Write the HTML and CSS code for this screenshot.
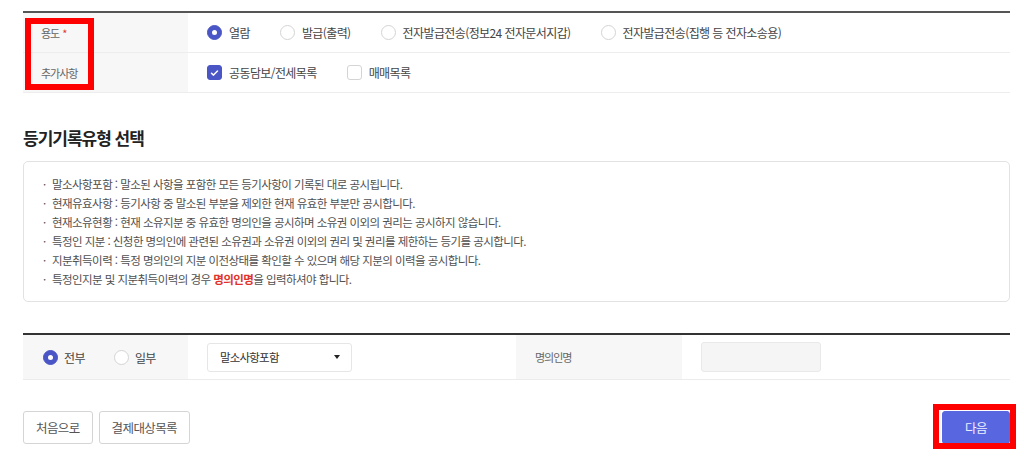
FILE: index.html
```html
<!DOCTYPE html>
<html lang="ko">
<head>
<meta charset="utf-8">
<title>등기기록유형 선택</title>
<link rel="stylesheet" href="styles.css">
</head>
<body>
<div class="page">
  <div class="form-table">
    <div class="row">
      <div class="label">용도 <span class="req">*</span></div>
      <div class="value">
        <label class="opt"><span class="radio on"></span>열람</label>
        <label class="opt"><span class="radio"></span>발급(출력)</label>
        <label class="opt"><span class="radio"></span>전자발급전송(정보24 전자문서지갑)</label>
        <label class="opt"><span class="radio"></span>전자발급전송(집행 등 전자소송용)</label>
      </div>
    </div>
    <div class="row">
      <div class="label">추가사항</div>
      <div class="value">
        <label class="opt"><span class="check on"><svg viewBox="0 0 16 16" width="16" height="16"><path d="M4.3 8.2l2.5 2.4 4.9-5" fill="none" stroke="#fff" stroke-width="1.8" stroke-linecap="round" stroke-linejoin="round"/></svg></span>공동담보/전세목록</label>
        <label class="opt"><span class="check"></span>매매목록</label>
      </div>
    </div>
  </div>

  <h2 class="title">등기기록유형 선택</h2>

  <ul class="info">
    <li>말소사항포함 : 말소된 사항을 포함한 모든 등기사항이 기록된 대로 공시됩니다.</li>
    <li>현재유효사항 : 등기사항 중 말소된 부분을 제외한 현재 유효한 부분만 공시합니다.</li>
    <li>현재소유현황 : 현재 소유지분 중 유효한 명의인을 공시하며 소유권 이외의 권리는 공시하지 않습니다.</li>
    <li>특정인 지분 : 신청한 명의인에 관련된 소유권과 소유권 이외의 권리 및 권리를 제한하는 등기를 공시합니다.</li>
    <li>지분취득이력 : 특정 명의인의 지분 이전상태를 확인할 수 있으며 해당 지분의 이력을 공시합니다.</li>
    <li>특정인지분 및 지분취득이력의 경우 <strong class="em">명의인명</strong>을 입력하셔야 합니다.</li>
  </ul>

  <div class="search-table">
    <div class="cell shade first">
      <label class="opt"><span class="radio on"></span>전부</label>
      <label class="opt"><span class="radio"></span>일부</label>
    </div>
    <div class="cell">
      <div class="select"><span>말소사항포함</span><span class="caret"></span></div>
    </div>
    <div class="cell shade label2">명의인명</div>
    <div class="cell">
      <div class="input"></div>
    </div>
  </div>

  <div class="actions">
    <div class="left">
      <button class="btn">처음으로</button>
      <button class="btn">결제대상목록</button>
    </div>
    <button class="btn primary">다음</button>
  </div>

  <div class="mark mark-1"></div>
  <div class="mark mark-2"></div>
</div>
</body>
</html>
```

FILE: styles.css
```css
* { box-sizing: border-box; }
html, body { margin: 0; padding: 0; background: #fff; }
body {
  font-family: "Noto Sans CJK KR", "Noto Sans", sans-serif;
  color: #444;
  width: 1024px;
  height: 460px;
  overflow: hidden;
}
.page {
  position: relative;
  width: 987px;
  margin-left: 23px;
  padding-top: 11px;
}
.form-table {
  border-top: 2px solid #555;
}
.row {
  display: flex;
  height: 40px;
  border-bottom: 1px solid #ededed;
}
.label {
  width: 165px;
  flex: none;
  background: #f7f7f7;
  display: flex;
  align-items: center;
  padding-left: 18px;
  font-size: 11px;
  letter-spacing: -1px;
  color: #666;
}
.req { color: #e0392b; margin-left: 3px; }
.value {
  flex: 1;
  display: flex;
  align-items: center;
  gap: 30px;
  padding-left: 19px;
}
.opt {
  display: inline-flex;
  align-items: center;
  gap: 7px;
  font-size: 12px;
  letter-spacing: -0.6px;
  color: #444;
  white-space: nowrap;
}
.radio {
  width: 15px;
  height: 15px;
  border-radius: 50%;
  border: 1px solid #d4d4d4;
  background: #fff;
  flex: none;
  display: inline-flex;
  align-items: center;
  justify-content: center;
}
.radio.on {
  border-color: #4a55c6;
  background: #4a55c6;
}
.radio.on::after {
  content: "";
  width: 5px;
  height: 5px;
  border-radius: 50%;
  background: #fff;
}
.check {
  width: 15px;
  height: 15px;
  border-radius: 3px;
  border: 1px solid #d4d4d4;
  background: #fff;
  flex: none;
  display: inline-flex;
  align-items: center;
  justify-content: center;
}
.check.on { background: #4a55c6; border-color: #4a55c6; }
.check svg { width: 14px; height: 14px; }

.title {
  margin: 33px 0 11px;
  font-size: 17px;
  line-height: 24px;
  font-weight: 700;
  letter-spacing: -1px;
  color: #222;
}
.info {
  list-style: none;
  margin: 0;
  padding: 13px 19px 12px;
  border: 1px solid #e2e2e2;
  border-radius: 5px;
  font-size: 11.5px;
  line-height: 19px;
  letter-spacing: -0.55px;
  color: #505050;
}
.info li::before {
  content: "·";
  display: inline-block;
  width: 9px;
}
.em { color: #e0332b; font-weight: 700; }

.search-table {
  margin-top: 31px;
  border-top: 2px solid #333;
  border-bottom: 1px solid #ececec;
  display: flex;
  height: 47px;
}
.cell {
  width: 328px;
  display: flex;
  align-items: center;
  padding-left: 19px;
}
.cell.shade { background: #f7f7f7; width: 165px; }
.cell.first { padding-left: 20px; gap: 0; }
.cell.first .opt { gap: 6px; margin-right: 29px; }
.cell.label2 {
  width: 166px;
  font-size: 11px;
  letter-spacing: -1px;
  color: #666;
}
.select {
  width: 145px;
  height: 29px;
  border: 1px solid #e6e6e6;
  border-radius: 3px;
  background: #fff;
  display: flex;
  align-items: center;
  justify-content: space-between;
  padding: 0 11px 0 12px;
  font-size: 11.5px;
  letter-spacing: -0.8px;
  color: #333;
}
.caret {
  width: 0;
  height: 0;
  border-left: 3.5px solid transparent;
  border-right: 3.5px solid transparent;
  border-top: 4.5px solid #222;
}
.input {
  width: 120px;
  height: 30px;
  border: 1px solid #e9e9e9;
  border-radius: 3px;
  background: #f5f5f5;
}

.actions {
  margin-top: 31px;
  display: flex;
  justify-content: space-between;
  align-items: center;
}
.left { display: flex; gap: 6px; }
.btn {
  height: 33px;
  padding: 0 12px;
  border: 1px solid #d5d5d5;
  border-radius: 3px;
  background: #fff;
  font-family: "Noto Sans CJK KR", "Noto Sans", sans-serif;
  font-size: 12.5px;
  letter-spacing: -0.6px;
  color: #555;
}
.btn.primary {
  width: 68px;
  background: #5866e0;
  border-color: #5866e0;
  color: #eef0ff;
}

.mark {
  position: absolute;
  border: 6px solid #ff0000;
  pointer-events: none;
}
.mark-1 { left: 2px; top: 18px; width: 69px; height: 72px; }
.mark-2 { left: 910px; top: 404px; width: 83px; height: 45px; }
```
